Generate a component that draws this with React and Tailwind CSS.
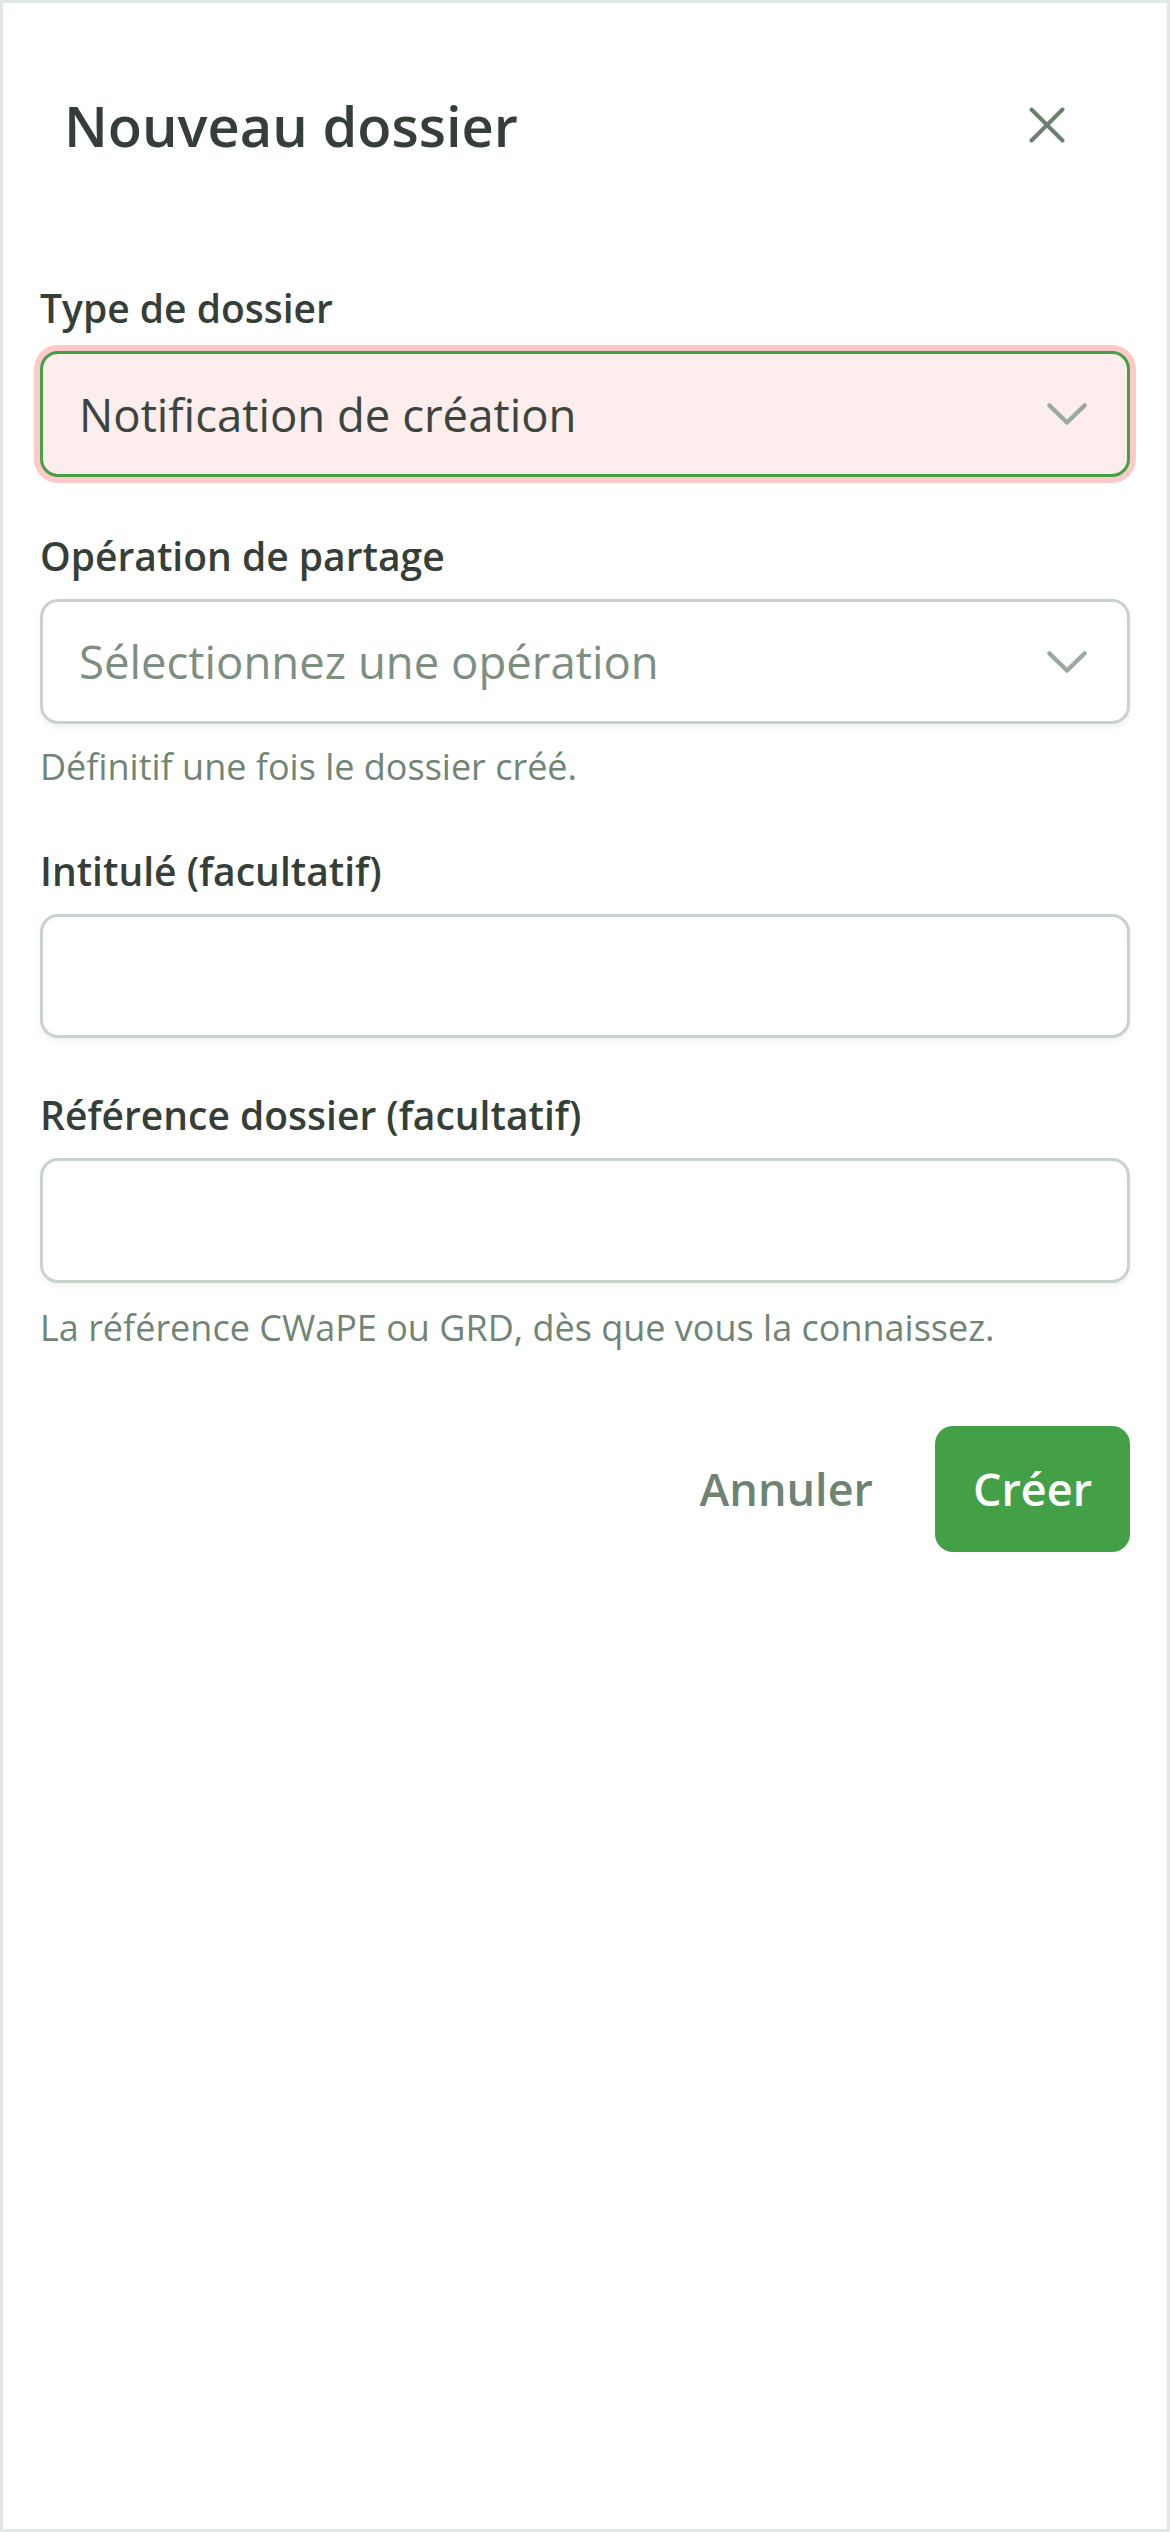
import React from 'react';

const font = { fontFamily: '"Open Sans", "Noto Sans", sans-serif' };

function Chevron() {
  return (
    <svg width="40" height="22" viewBox="0 0 40 22" fill="none" className="shrink-0">
      <path d="M2.5 2.5 L20 19.5 L37.5 2.5" stroke="#9aaa9e" strokeWidth="4.5" strokeLinecap="round" strokeLinejoin="round" />
    </svg>
  );
}

function Label({ children }) {
  return <p className="text-[39px] leading-[54px] font-semibold text-[#353f37]">{children}</p>;
}

function Help({ children }) {
  return <p className="text-[36px] leading-[50px] text-[#708574]">{children}</p>;
}

export default function App() {
  return (
    <div className="min-h-screen bg-[#e1e8e3] p-[3px]" style={font}>
      <div className="bg-white min-h-[2526px] px-[37px]">
        {/* header */}
        <div className="flex items-center justify-between pt-[84px] pl-[24px] pr-[65px]">
          <h1 className="text-[56px] leading-[76px] font-semibold text-[#353f37]">Nouveau dossier</h1>
          <svg width="36" height="36" viewBox="0 0 36 36" fill="none">
            <path d="M2.5 2.5 L33.5 33.5 M33.5 2.5 L2.5 33.5" stroke="#6b806f" strokeWidth="4" strokeLinecap="round" />
          </svg>
        </div>

        {/* type de dossier */}
        <div className="mt-[118px]">
          <Label>Type de dossier</Label>
          <div className="mt-[16px] h-[126px] flex items-center justify-between rounded-[18px] border-[3px] border-[#43a047] bg-[#feeded] pl-[36px] pr-[40px] shadow-[0_0_0_6px_#ffc9c9]">
            <span className="text-[45.5px] text-[#3a453d]">Notification de création</span>
            <Chevron />
          </div>
        </div>

        {/* opération */}
        <div className="mt-[52px]">
          <Label>Opération de partage</Label>
          <div className="mt-[16px] h-[125px] flex items-center justify-between rounded-[18px] border-[3px] border-[#c9d2cb] bg-white pl-[36px] pr-[40px] shadow-[0_3px_6px_rgba(0,0,0,0.06)]">
            <span className="text-[45.5px] text-[#7d8f80]">Sélectionnez une opération</span>
            <Chevron />
          </div>
          <div className="mt-[18px]">
            <Help>Définitif une fois le dossier créé.</Help>
          </div>
        </div>

        {/* intitulé */}
        <div className="mt-[52px]">
          <Label>Intitulé (facultatif)</Label>
          <div className="mt-[16px] h-[124px] rounded-[18px] border-[3px] border-[#c9d2cb] bg-white shadow-[0_3px_6px_rgba(0,0,0,0.06)]" />
        </div>

        {/* référence */}
        <div className="mt-[50px]">
          <Label>Référence dossier (facultatif)</Label>
          <div className="mt-[16px] h-[125px] rounded-[18px] border-[3px] border-[#c9d2cb] bg-white shadow-[0_3px_6px_rgba(0,0,0,0.06)]" />
          <div className="mt-[20px]">
            <Help>La référence CWaPE ou GRD, dès que vous la connaissez.</Help>
          </div>
        </div>

        {/* actions */}
        <div className="mt-[73px] flex items-center justify-end">
          <button className="mr-[62px] text-[45px] font-semibold text-[#6f8373]">Annuler</button>
          <button className="h-[126px] w-[195px] rounded-[18px] bg-[#43a047] text-[45px] font-semibold text-white">Créer</button>
        </div>
      </div>
    </div>
  );
}
